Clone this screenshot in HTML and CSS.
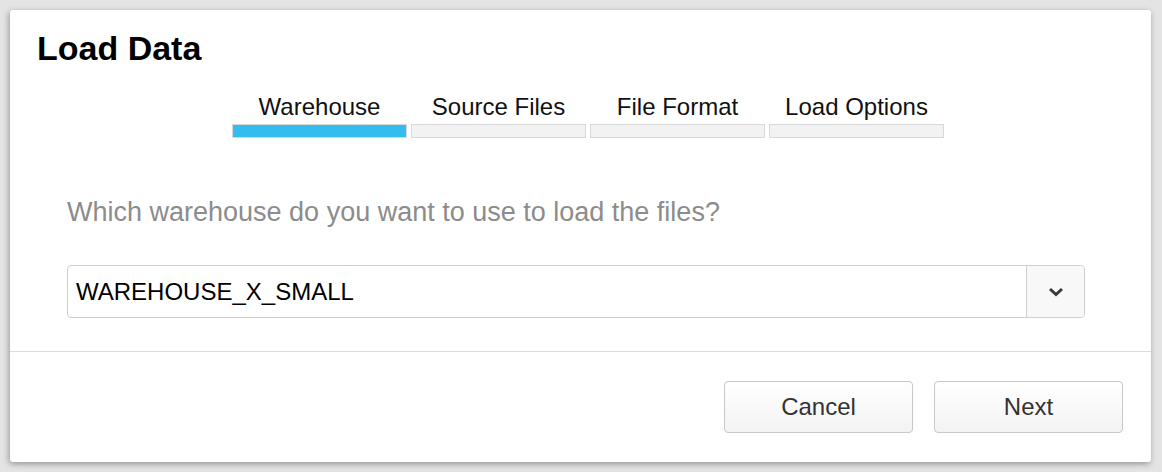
FILE: index.html
```html
<!DOCTYPE html>
<html>
<head>
<meta charset="utf-8">
<link rel="stylesheet" href="styles.css">
</head>
<body>
<div class="dialog">
  <h1 class="title">Load Data</h1>
  <div class="steps">
    <div class="step active"><span class="step-label">Warehouse</span><span class="step-bar"></span></div>
    <div class="step"><span class="step-label">Source Files</span><span class="step-bar"></span></div>
    <div class="step"><span class="step-label">File Format</span><span class="step-bar"></span></div>
    <div class="step"><span class="step-label">Load Options</span><span class="step-bar"></span></div>
  </div>
  <div class="body">
    <p class="question">Which warehouse do you want to use to load the files?</p>
    <div class="select">
      <span class="select-value">WAREHOUSE_X_SMALL</span>
      <span class="select-btn">
        <svg width="18" height="12" viewBox="0 0 18 12"><path d="M3 3 L9 8.5 L15 3" fill="none" stroke="#3a3a3a" stroke-width="3"/></svg>
      </span>
    </div>
  </div>
  <div class="footer">
    <button class="btn">Cancel</button>
    <button class="btn">Next</button>
  </div>
</div>
</body>
</html>
```

FILE: styles.css
```css
* { box-sizing: border-box; }
html, body { margin: 0; padding: 0; }
body {
  background: #e4e4e4;
  padding: 10px;
  font-family: "Liberation Sans", Arial, sans-serif;
  width: 1162px;
  height: 472px;
  overflow: hidden;
}
.dialog {
  width: 1141px;
  height: 452px;
  background: #fff;
  border-radius: 3px;
  box-shadow: -1px 2px 6px rgba(0,0,0,0.35);
  display: flex;
  flex-direction: column;
}
.title {
  margin: 0;
  padding: 18px 0 0 27px;
  font-size: 34px;
  line-height: 40px;
  font-weight: bold;
  color: #000;
}
.steps {
  display: flex;
  gap: 4px;
  margin: 25px 0 0 222px;
}
.step {
  width: 175px;
  display: flex;
  flex-direction: column;
  align-items: center;
}
.step-label {
  font-size: 24px;
  line-height: 28px;
  color: #111;
}
.step-bar {
  display: block;
  width: 100%;
  height: 14px;
  margin-top: 3px;
  background: #f2f2f2;
  border: 1px solid #d8d8d8;
}
.step.active .step-bar {
  background: #33bdef;
}
.body {
  padding: 0 66px 33px 57px;
  border-bottom: 1px solid #dcdcdc;
}
.question {
  margin: 58px 0 0 0;
  font-size: 27px;
  line-height: 32px;
  color: #8c8c8c;
}
.select {
  margin-top: 37px;
  height: 53px;
  display: flex;
  border: 1px solid #cfcfcf;
  border-radius: 4px;
  overflow: hidden;
}
.select-value {
  flex: 1;
  padding-left: 8px;
  font-size: 24px;
  line-height: 51px;
  color: #000;
}
.select-btn {
  width: 58px;
  border-left: 1px solid #cfcfcf;
  background: #f8f8f8;
  display: flex;
  align-items: center;
  justify-content: center;
}
.footer {
  display: flex;
  justify-content: flex-end;
  gap: 21px;
  padding: 29px 28px 0 0;
}
.btn {
  width: 189px;
  height: 52px;
  border: 1px solid #c8c8c8;
  border-radius: 4px;
  background: linear-gradient(#ffffff, #f3f3f3);
  font-family: "Liberation Sans", Arial, sans-serif;
  font-size: 24px;
  color: #333;
  padding: 0;
}
```
